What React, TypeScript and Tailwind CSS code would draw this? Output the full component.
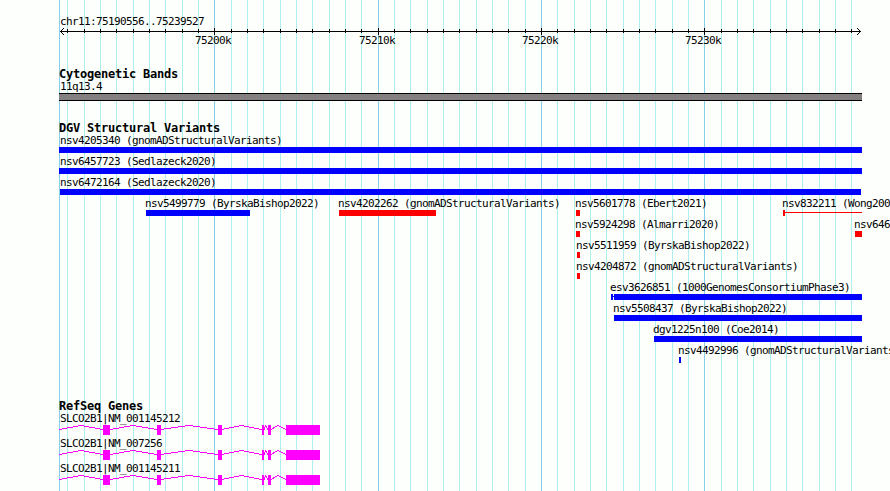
type Feature = {
  label: string;
  labelX: number;
  start: number;
  end: number;
  color: string;
  shape?: "bar" | "tick-line" | "split";
};

const BLUE = "bg-[#0000ff]";
const RED = "bg-[#ff0000]";

const minorLines = Array.from({ length: 49 }, (_, n) => ({
  x: Math.floor((203 + 49 * n) / 3),
  major: n % 10 === 9,
}));

const rulerLabels = [
  { text: "75200k", x: 195 },
  { text: "75210k", x: 359 },
  { text: "75220k", x: 522 },
  { text: "75230k", x: 685 },
];

const variantRows: Feature[][] = [
  [{ label: "nsv4205340 (gnomADStructuralVariants)", labelX: 60, start: 59, end: 862, color: BLUE }],
  [{ label: "nsv6457723 (Sedlazeck2020)", labelX: 60, start: 59, end: 862, color: BLUE }],
  [{ label: "nsv6472164 (Sedlazeck2020)", labelX: 60, start: 60, end: 861, color: BLUE }],
  [
    { label: "nsv5499779 (ByrskaBishop2022)", labelX: 145, start: 146, end: 250, color: BLUE },
    { label: "nsv4202262 (gnomADStructuralVariants)", labelX: 338, start: 339, end: 436, color: RED },
    { label: "nsv5601778 (Ebert2021)", labelX: 575, start: 576, end: 580, color: RED },
    { label: "nsv832211 (Wong200", labelX: 782, start: 783, end: 862, color: RED, shape: "tick-line" },
  ],
  [
    { label: "nsv5924298 (Almarri2020)", labelX: 575, start: 576, end: 580, color: RED },
    { label: "nsv646", labelX: 854, start: 855, end: 862, color: RED },
  ],
  [{ label: "nsv5511959 (ByrskaBishop2022)", labelX: 576, start: 577, end: 580, color: RED }],
  [{ label: "nsv4204872 (gnomADStructuralVariants)", labelX: 576, start: 577, end: 580, color: RED }],
  [{ label: "esv3626851 (1000GenomesConsortiumPhase3)", labelX: 610, start: 611, end: 862, color: BLUE, shape: "split" }],
  [{ label: "nsv5508437 (ByrskaBishop2022)", labelX: 613, start: 614, end: 862, color: BLUE }],
  [{ label: "dgv1225n100 (Coe2014)", labelX: 653, start: 654, end: 862, color: BLUE }],
  [{ label: "nsv4492996 (gnomADStructuralVariants", labelX: 678, start: 679, end: 681, color: BLUE }],
];

const genes = ["SLCO2B1|NM_001145212", "SLCO2B1|NM_007256", "SLCO2B1|NM_001145211"];
const exons = [
  [103, 7],
  [157, 4],
  [218, 4],
  [262, 2],
  [268, 3],
  [286, 34],
];
const introns = [
  [59, 81, 103],
  [110, 133, 157],
  [161, 189, 218],
  [222, 241, 262],
  [264, 265.5, 268],
  [271, 278, 286],
];

function GridLines() {
  return (
    <svg className="absolute left-0 top-0" width="890" height="491" shapeRendering="crispEdges">
      <rect x="59" y="0" width="1" height="491" fill="#87ceeb" />
      {minorLines.map(({ x, major }) => (
        <rect key={x} x={x} y="0" width="1" height="491" fill={major ? "#87ceeb" : "#afeeee"} />
      ))}
    </svg>
  );
}

function Ruler() {
  return (
    <>
      <svg className="block overflow-visible" width="890" height="6" shapeRendering="crispEdges">
        <rect x="60" y="3" width="801" height="1" />
        {minorLines.map(({ x, major }) => (
          <rect key={x} x={x} y={major ? 0 : 1} width="1" height={major ? 7 : 4} />
        ))}
        {[1, 2, 3].map((d) => (
          <g key={d}>
            <rect x={60 + d} y={3 - d} width="1" height="1" />
            <rect x={60 + d} y={3 + d} width="1" height="1" />
            <rect x={860 - d} y={3 - d} width="1" height="1" />
            <rect x={860 - d} y={3 + d} width="1" height="1" />
          </g>
        ))}
      </svg>
      <div className="relative h-[13px]">
        {rulerLabels.map((l) => (
          <span key={l.text} className="absolute top-0" style={{ left: l.x }}>
            {l.text}
          </span>
        ))}
      </div>
    </>
  );
}

function Heading({ children }: { children: string }) {
  return <h2 className="ml-[59px] h-3 text-[12px] leading-[13px] font-bold tracking-[-0.22px]">{children}</h2>;
}

function Glyph({ feature }: { feature: Feature }) {
  const { start, end, color, shape = "bar" } = feature;
  const style = { left: start, width: end - start };
  if (shape === "tick-line") {
    return (
      <div className="absolute top-[13px] flex h-1.5" style={style}>
        <div className={`h-full w-0.5 ${color}`} />
        <div className={`mt-0.5 h-px flex-1 ${color}`} />
      </div>
    );
  }
  if (shape === "split") {
    return (
      <div className="absolute top-[13px] flex h-1.5" style={style}>
        <div className={`h-full w-0.5 ${color}`} />
        <div className={`mt-[2px] h-px w-px ${color}`} />
        <div className={`h-full flex-1 ${color}`} />
      </div>
    );
  }
  return <div className={`absolute top-[13px] h-1.5 ${color}`} style={style} />;
}

function Gene({ name }: { name: string }) {
  return (
    <div className="h-[25px]">
      <p className="ml-[60px]">{name}</p>
      <svg className="block" width="890" height="10" shapeRendering="crispEdges">
        {introns.map(([a, m, b]) => (
          <polyline key={a} points={`${a},4.5 ${m},0.5 ${b},4.5`} fill="none" stroke="#ff00ff" />
        ))}
        {exons.map(([x, w]) => (
          <rect key={x} x={x} y="0" width={w} height="10" fill="#ff00ff" />
        ))}
      </svg>
    </div>
  );
}

export default function App() {
  return (
    <main className="relative h-[491px] w-[890px] overflow-hidden whitespace-nowrap bg-[#fdfffc] font-['DejaVu_Sans_Mono',monospace] text-[11px] leading-[13px] tracking-[-0.62px] text-black">
      <GridLines />
      <div className="relative flex flex-col pt-[15px]">
        <section>
          <p className="ml-[60px]">chr11:75190556..75239527</p>
          <Ruler />
        </section>
        <section className="mt-[21px]">
          <Heading>Cytogenetic Bands</Heading>
          <p className="ml-[60px]">11q13.4</p>
          <div className="ml-[59px] h-2 w-[803px] border-y border-black bg-[#848082]" />
        </section>
        <section className="mt-[21px]">
          <Heading>DGV Structural Variants</Heading>
          {variantRows.map((row, i) => (
            <div key={i} className="relative h-[21px]">
              {row.map((f) => (
                <div key={f.label}>
                  <span className="absolute top-0" style={{ left: f.labelX }}>
                    {f.label}
                  </span>
                  <Glyph feature={f} />
                </div>
              ))}
            </div>
          ))}
        </section>
        <section className="mt-[35px]">
          <Heading>RefSeq Genes</Heading>
          {genes.map((g) => (
            <Gene key={g} name={g} />
          ))}
        </section>
      </div>
    </main>
  );
}
